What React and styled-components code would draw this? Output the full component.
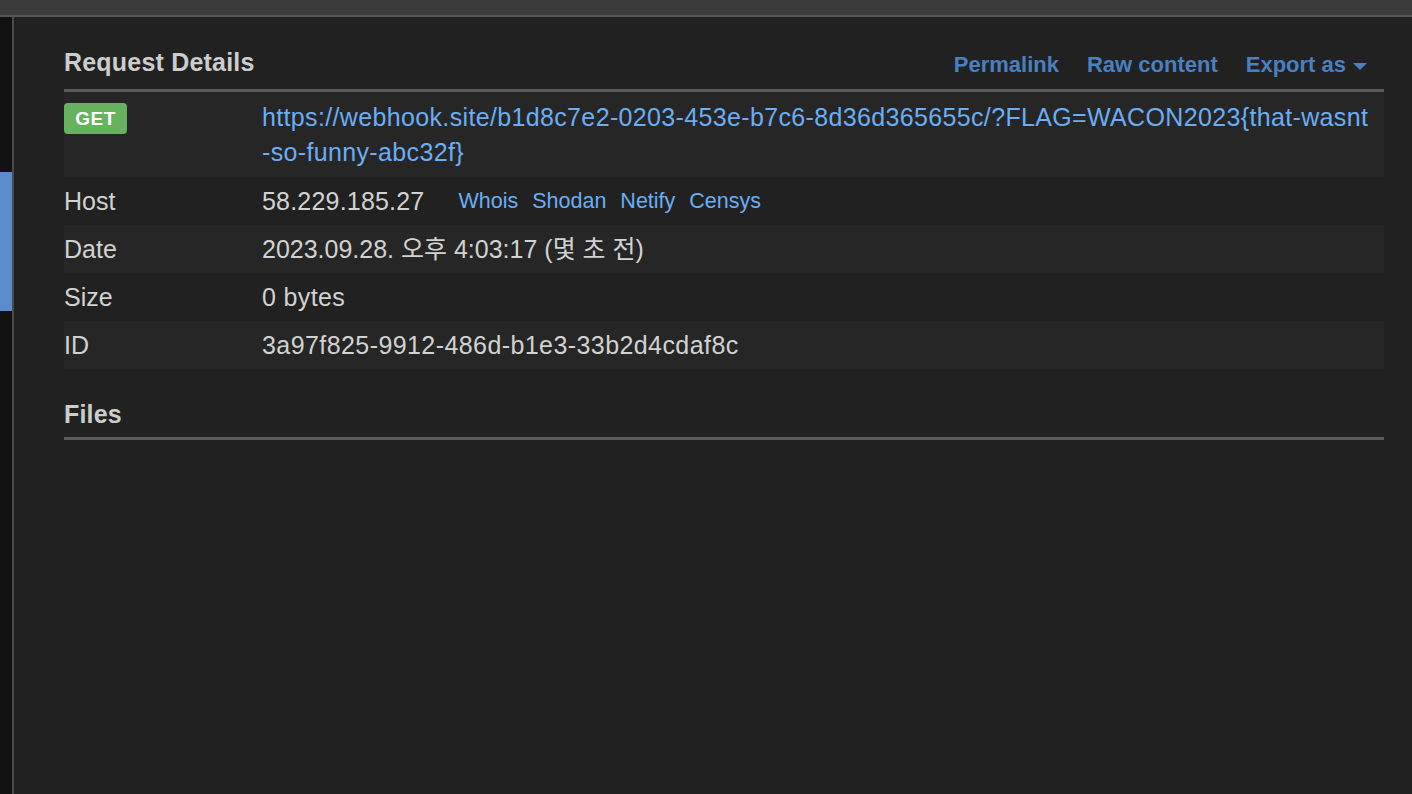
import React from 'react'
import styled, { createGlobalStyle } from 'styled-components'

const GlobalStyle = createGlobalStyle`
  html, body {
    margin: 0;
    padding: 0;
    background: #212121;
    font-family: 'Liberation Sans', Arial, 'Noto Sans CJK KR', sans-serif;
  }
`

const rows = [
  { label: 'Host', value: '58.229.185.27', tools: ['Whois', 'Shodan', 'Netify', 'Censys'], spacing: 0.2 },
  { label: 'Date', value: '2023.09.28. 오후 4:03:17 (몇 초 전)', spacing: 0 },
  { label: 'Size', value: '0 bytes', spacing: 0.35 },
  { label: 'ID', value: '3a97f825-9912-486d-b1e3-33b2d4cdaf8c', spacing: 0.42 },
]

export default function App () {
  return (
    <Page>
      <GlobalStyle />
      <TopBar />
      <Body>
        <Sidebar>
          <SidebarAccent />
        </Sidebar>
        <Main>
          <SectionHeader>
            <Heading>Request Details</Heading>
            <Actions>
              <Action>Permalink</Action>
              <Action>Raw content</Action>
              <Action>
                Export as <Caret />
              </Action>
            </Actions>
          </SectionHeader>
          <Table>
            <Row $striped $tall $spacing={0.35}>
              <Label>
                <Badge>GET</Badge>
              </Label>
              <Value>
                <UrlLink>
                  https://webhook.site/b1d8c7e2-0203-453e-b7c6-8d36d365655c/?FLAG=WACON2023{'{'}that-wasnt
                  <br />
                  -so-funny-abc32f{'}'}
                </UrlLink>
              </Value>
            </Row>
            {rows.map((r, i) => (
              <Row key={r.label} $striped={i % 2 === 1} $spacing={r.spacing}>
                <Label>{r.label}</Label>
                <Value>
                  {r.value}
                  {r.tools && (
                    <Tools>
                      {r.tools.map(t => <Tool key={t}>{t}</Tool>)}
                    </Tools>
                  )}
                </Value>
              </Row>
            ))}
          </Table>
          <SectionHeader $files>
            <Heading>Files</Heading>
          </SectionHeader>
        </Main>
      </Body>
    </Page>
  )
}

const Page = styled.div`
  display: flex;
  flex-direction: column;
  height: 794px;
  overflow: hidden;
  background: #212121;
`

const TopBar = styled.div`
  height: 15px;
  flex-shrink: 0;
  background: #3b3b3b;
  border-bottom: 2px solid #575757;
`

const Body = styled.div`
  display: flex;
  flex: 1;
`

const Sidebar = styled.div`
  width: 12px;
  flex-shrink: 0;
  background: #121212;
  border-right: 2px solid #4a4a4a;
  padding-top: 155px;
`

const SidebarAccent = styled.div`
  height: 139px;
  background: #5b8ccc;
`

const Main = styled.div`
  flex: 1;
  padding: 0 28px 0 50px;
`

const SectionHeader = styled.div`
  display: flex;
  align-items: flex-end;
  justify-content: space-between;
  height: ${p => (p.$files ? '54px' : '75px')};
  padding-bottom: ${p => (p.$files ? '8px' : '12px')};
  box-sizing: border-box;
  border-bottom: 3px solid #5a5a5a;
  margin-top: ${p => (p.$files ? '17px' : '0')};
`

const Heading = styled.h2`
  margin: 0;
  font-size: 25px;
  font-weight: bold;
  color: #cdcdcd;
  line-height: 30px;
  letter-spacing: 0.2px;
`

const Actions = styled.div`
  display: flex;
  gap: 28px;
  padding-right: 17px;
  margin-bottom: -2px;
`

const Action = styled.a`
  font-size: 22px;
  font-weight: bold;
  color: #4a80c2;
  line-height: 28px;
  display: flex;
  align-items: center;
  gap: 7px;
  cursor: pointer;
`

const Caret = styled.span`
  width: 0;
  height: 0;
  border-left: 7px solid transparent;
  border-right: 7px solid transparent;
  border-top: 7px solid #4a80c2;
  margin-top: 3px;
`

const Table = styled.div`
  display: flex;
  flex-direction: column;
`

const Row = styled.div`
  display: flex;
  background: ${p => (p.$striped ? '#262626' : 'transparent')};
  padding: ${p => (p.$tall ? '8px 0 7px' : '7px 0')};
  font-size: 25px;
  line-height: 34px;
  letter-spacing: ${p => p.$spacing}px;
  color: #d2d2d2;
`

const Label = styled.div`
  width: 198px;
  flex-shrink: 0;
  display: flex;
  align-items: flex-start;
  letter-spacing: 0;
`

const Value = styled.div`
  flex: 1;
  display: flex;
  align-items: center;
`

const Badge = styled.span`
  display: inline-flex;
  align-items: center;
  justify-content: center;
  width: 63px;
  height: 31px;
  margin-top: 3px;
  border-radius: 4px;
  background: #66b25e;
  color: #fff;
  font-size: 19px;
  line-height: 1;
  font-weight: bold;
  letter-spacing: 0.5px;
`

const UrlLink = styled.a`
  color: #6aaef5;
  line-height: 35px;
  cursor: pointer;
`

const Tools = styled.div`
  display: flex;
  gap: 14px;
  margin-left: 34px;
  letter-spacing: 0;
`

const Tool = styled.a`
  font-size: 21.5px;
  color: #6aaef5;
  cursor: pointer;
`
